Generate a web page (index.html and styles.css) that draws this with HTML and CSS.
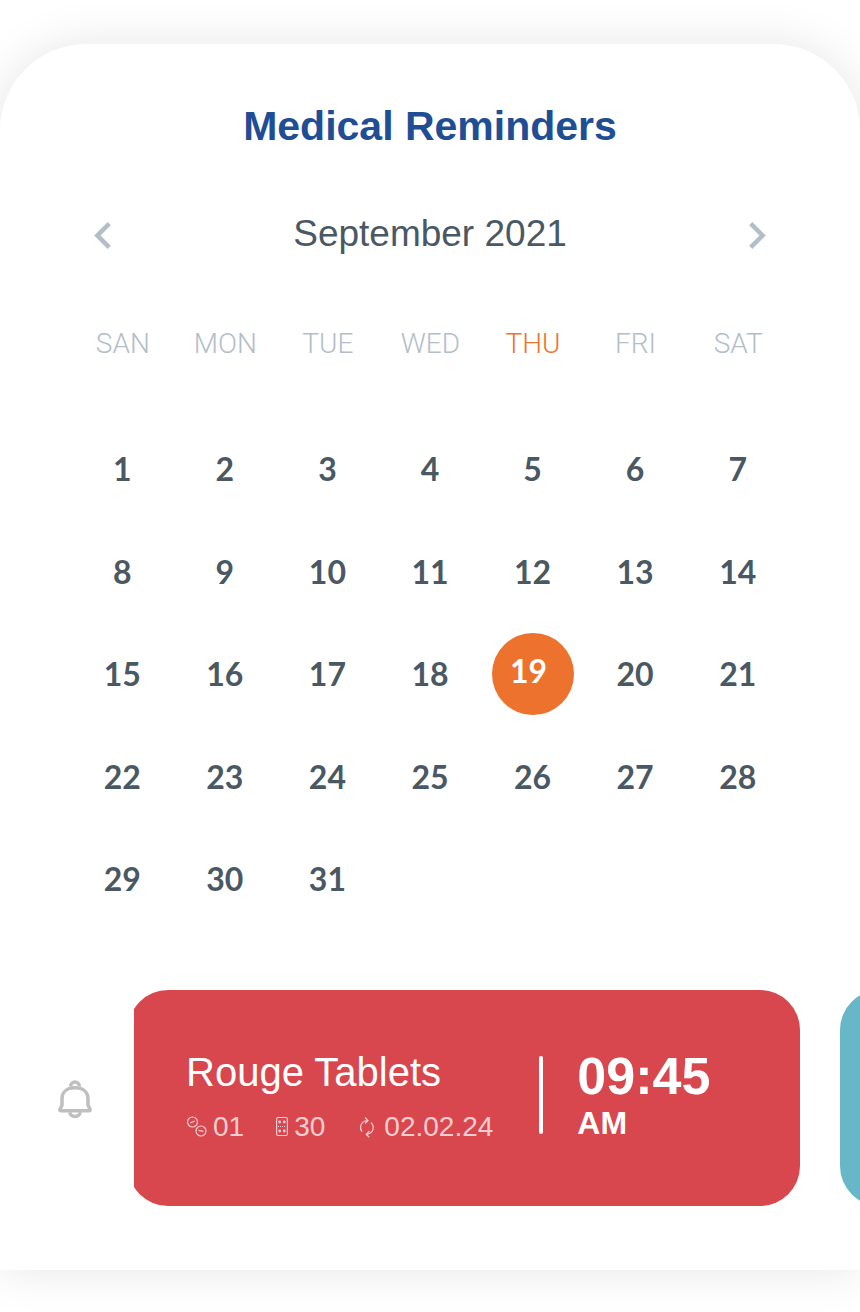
FILE: index.html
```
<!DOCTYPE html>
<html lang="en">
<head>
<meta charset="utf-8">
<meta name="viewport" content="width=device-width, initial-scale=1">
<title>Medical Reminders</title>
<link rel="stylesheet" href="styles.css">
</head>
<body>
<main class="sheet">
  <h1 class="title">Medical Reminders</h1>

  <div class="month">
    <button class="month-nav" type="button" aria-label="Previous month">
      <svg class="chevron" viewBox="8 6 7.41 12" aria-hidden="true"><path d="M15.41 7.41L14 6l-6 6 6 6 1.41-1.41L10.83 12z"/></svg>
    </button>
    <h2 class="month-name">September 2021</h2>
    <button class="month-nav" type="button" aria-label="Next month">
      <svg class="chevron" viewBox="8.59 6 7.41 12" aria-hidden="true"><path d="M10 6L8.59 7.41 13.17 12l-4.58 4.59L10 18l6-6z"/></svg>
    </button>
  </div>

  <table class="calendar">
    <thead>
      <tr><th scope="col">SAN</th><th scope="col">MON</th><th scope="col">TUE</th><th scope="col">WED</th><th scope="col" class="current">THU</th><th scope="col">FRI</th><th scope="col">SAT</th></tr>
    </thead>
    <tbody>
      <tr><td><button class="day" type="button">1</button></td><td><button class="day" type="button">2</button></td><td><button class="day" type="button">3</button></td><td><button class="day" type="button">4</button></td><td><button class="day" type="button">5</button></td><td><button class="day" type="button">6</button></td><td><button class="day" type="button">7</button></td></tr>
      <tr><td><button class="day" type="button">8</button></td><td><button class="day" type="button">9</button></td><td><button class="day" type="button">10</button></td><td><button class="day" type="button">11</button></td><td><button class="day" type="button">12</button></td><td><button class="day" type="button">13</button></td><td><button class="day" type="button">14</button></td></tr>
      <tr><td><button class="day" type="button">15</button></td><td><button class="day" type="button">16</button></td><td><button class="day" type="button">17</button></td><td><button class="day" type="button">18</button></td><td><button class="day selected" type="button" aria-pressed="true">19</button></td><td><button class="day" type="button">20</button></td><td><button class="day" type="button">21</button></td></tr>
      <tr><td><button class="day" type="button">22</button></td><td><button class="day" type="button">23</button></td><td><button class="day" type="button">24</button></td><td><button class="day" type="button">25</button></td><td><button class="day" type="button">26</button></td><td><button class="day" type="button">27</button></td><td><button class="day" type="button">28</button></td></tr>
      <tr><td><button class="day" type="button">29</button></td><td><button class="day" type="button">30</button></td><td><button class="day" type="button">31</button></td><td></td><td></td><td></td><td></td></tr>
    </tbody>
  </table>

  <section class="reminders" aria-label="Reminders">
    <svg class="bell" viewBox="0 0 34 38" aria-hidden="true">
      <path d="M4 25v-6C4 12 9 7.800 17 7.800S30 12 30 19v6l2 4.200q.6 1.600-1 1.600H3q-1.600 0-1-1.600z"/>
      <path d="M12.700 6.500a4.300 4.500 0 0 1 8.600 0"/>
      <path d="M12 32.200a5 4.200 0 0 0 10 0"/>
    </svg>
    <div class="reminder-list">
      <article class="reminder">
        <div class="details">
          <h3 class="medicine">Rouge Tablets</h3>
          <ul class="facts">
            <li class="fact">
              <svg width="21" height="22" viewBox="0 0 21 22" aria-hidden="true">
                <circle cx="6.500" cy="6" r="5"/><path d="M4.200 7l4.500-2"/>
                <circle cx="15" cy="15" r="5"/><path d="M12.500 14.400l5 1"/>
              </svg>
              <span>01</span>
            </li>
            <li class="fact">
              <svg width="12" height="22" viewBox="0 0 12 22" aria-hidden="true">
                <rect x=".6" y="1.500" width="10.800" height="18" rx="1.500"/>
                <path d="M2 10.500h8" stroke-dasharray="1 1"/>
                <g class="solid"><circle cx="3.700" cy="6" r="1.400"/><circle cx="8.300" cy="6" r="1.400"/><circle cx="3.700" cy="15" r="1.400"/><circle cx="8.300" cy="15" r="1.400"/></g>
              </svg>
              <span>30</span>
            </li>
            <li class="fact">
              <svg width="21" height="22" viewBox="0 0 21 22" aria-hidden="true">
                <path d="M5 15.700C2.300 12 3 5.500 10.500 4.500M8 1.500l3 3-3 3M14 6.500c3.700 3.700 3 10.500-4.500 12M12.300 21.300L9.300 18.400l3-3.400"/>
              </svg>
              <span>02.02.24</span>
            </li>
          </ul>
        </div>
        <div class="divider"></div>
        <time class="time" datetime="09:45">
          <span class="clock">09:45</span>
          <span class="period">AM</span>
        </time>
      </article>
      <article class="reminder next" aria-label="Next reminder"></article>
    </div>
  </section>
</main>
</body>
</html>
```
FILE: styles.css
```
* {
  box-sizing: border-box;
}

body {
  margin: 0;
  padding: 44px 0 42px;
  background: #fff;
  color: #4a5863;
  font-family: "Liberation Sans", Arial, sans-serif;
  overflow-x: hidden;
}

h1, h2, h3, ul {
  margin: 0;
  padding: 0;
}

button {
  border: 0;
  background: none;
  cursor: pointer;
}

.sheet {
  padding: 58px 0 64px;
  border-radius: 86px 86px 0 0;
  background: #fff;
  box-shadow: 0 0 48px rgba(0, 0, 0, 0.1);
}

.title {
  color: #1f4e94;
  font-size: 41px;
  font-weight: 700;
  line-height: 48px;
  text-align: center;
}

.month {
  display: flex;
  align-items: center;
  justify-content: space-between;
  margin-top: 62px;
  padding: 0 94px;
}

.month-name {
  font-size: 37px;
  font-weight: 400;
  line-height: 44px;
}

.month-nav {
  padding: 3px 0 0;
}

.chevron {
  display: block;
  width: 17px;
  height: 27px;
  fill: #b3bec8;
}

.calendar {
  width: calc(100% - 142px);
  margin: 72px 71px 0;
  border-collapse: collapse;
  table-layout: fixed;
}

.calendar th {
  height: 90px;
  padding: 0 0 0 1px;
  color: #b3bec8;
  font: 300 28px/32px Roboto, "Liberation Sans", sans-serif;
  text-align: center;
  vertical-align: top;
}

.calendar .current {
  color: #ed722e;
}

.calendar td {
  height: 102px;
  padding: 0;
}

.calendar tr:nth-child(even) td {
  height: 103px;
}

.day {
  display: block;
  width: 82px;
  height: 82px;
  margin: 0 auto;
  padding: 0;
  border-radius: 50%;
  color: #4a5863;
  font: 700 32px/40px Lato, "Liberation Sans", sans-serif;
  text-align: center;
}

.day.selected {
  padding: 0 8px 6px 0;
  background: #ed722e;
  color: #fff;
}

.reminders {
  display: flex;
  align-items: center;
  gap: 42px;
  margin-top: 60px;
  padding-left: 58px;
}

.bell {
  flex: none;
  width: 34px;
  height: 38px;
  margin-top: 2px;
  fill: none;
  stroke: #bfbfbf;
  stroke-width: 3.5;
}

.reminder-list {
  display: flex;
  flex: 1;
  gap: 40px;
  min-width: 0;
  overflow: hidden;
}

.reminder {
  display: flex;
  flex: 0 0 calc(100% - 54px);
  align-items: flex-start;
  min-height: 216px;
  padding: 58px;
  border-radius: 40px;
  background: #d8474d;
  color: #fff;
}

.reminder:first-child {
  margin-left: -6px;
}

.reminder.next {
  background: #68b7c9;
}

.medicine {
  font-size: 40px;
  font-weight: 400;
  line-height: 48px;
}

.facts {
  display: flex;
  gap: 32px;
  margin-top: 15px;
  color: #f5cdd0;
  font-size: 28px;
  line-height: 32px;
  list-style: none;
}

.fact {
  display: flex;
  align-items: center;
  gap: 6px;
}

.fact svg {
  flex: none;
  fill: none;
  stroke: currentColor;
  stroke-width: 1.2;
}

.fact .solid {
  fill: currentColor;
  stroke: none;
}

.divider {
  flex: none;
  width: 4px;
  height: 78px;
  margin: 8px 34px 0 46px;
  border-radius: 2px;
  background: #fff;
}

.time {
  display: flex;
  flex-direction: column;
  font-weight: 700;
}

.clock {
  font-size: 52px;
  line-height: 56px;
}

.period {
  font-size: 32px;
  line-height: 38px;
}
```
